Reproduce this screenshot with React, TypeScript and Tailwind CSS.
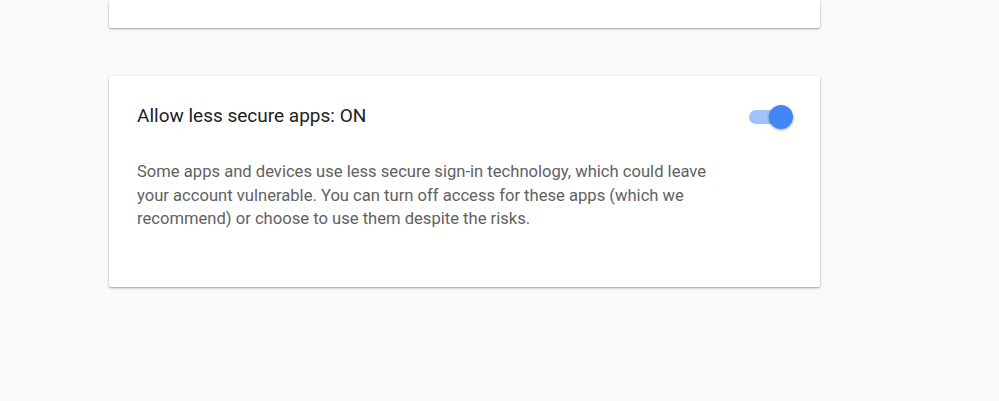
import React, { useState } from "react";

export default function App() {
  const [on, setOn] = useState(true);

  return (
    <div className="min-h-[401px] w-full bg-[#fafafa] font-['Roboto',sans-serif]">
      <div className="ml-[109px] w-[711px]">
        {/* tail of the previous card, scrolled off the top */}
        <div className="h-[28px] rounded-b-[2px] bg-white shadow-[0_1px_3px_rgba(0,0,0,0.28),0_1px_1px_rgba(0,0,0,0.12)]" />

        <div className="mt-[48px] rounded-[2px] bg-white px-[28px] pt-[28px] pb-[56px] shadow-[0_1px_3px_rgba(0,0,0,0.28),0_1px_1px_rgba(0,0,0,0.12)]">
          <div className="flex items-center justify-between">
            <h2 className="text-[19px] leading-[24px] text-[#212121]">
              Allow less secure apps: {on ? "ON" : "OFF"}
            </h2>
            <button
              type="button"
              onClick={() => setOn(!on)}
              className="relative mr-[-1px] h-[24px] w-[45px]"
              aria-pressed={on}
            >
              <span
                className={
                  on
                    ? "absolute left-[1px] top-[6px] h-[14px] w-[38px] rounded-full bg-[#a1c2fa]"
                    : "absolute left-[1px] top-[6px] h-[14px] w-[38px] rounded-full bg-[#bdbdbd]"
                }
              />
              <span
                className={
                  on
                    ? "absolute right-0 top-[1px] h-[24px] w-[24px] rounded-full bg-[#4285f4] shadow-[0_1px_3px_rgba(0,0,0,0.35)]"
                    : "absolute left-0 top-[1px] h-[24px] w-[24px] rounded-full bg-[#f1f1f1] shadow-[0_1px_3px_rgba(0,0,0,0.35)]"
                }
              />
            </button>
          </div>
          <p className="mt-[32px] max-w-[590px] text-[16.6px] leading-[23.5px] text-[#616161]">
            Some apps and devices use less secure sign-in technology, which could leave
            your account vulnerable. You can turn off access for these apps (which we
            recommend) or choose to use them despite the risks.
          </p>
        </div>
      </div>
    </div>
  );
}
